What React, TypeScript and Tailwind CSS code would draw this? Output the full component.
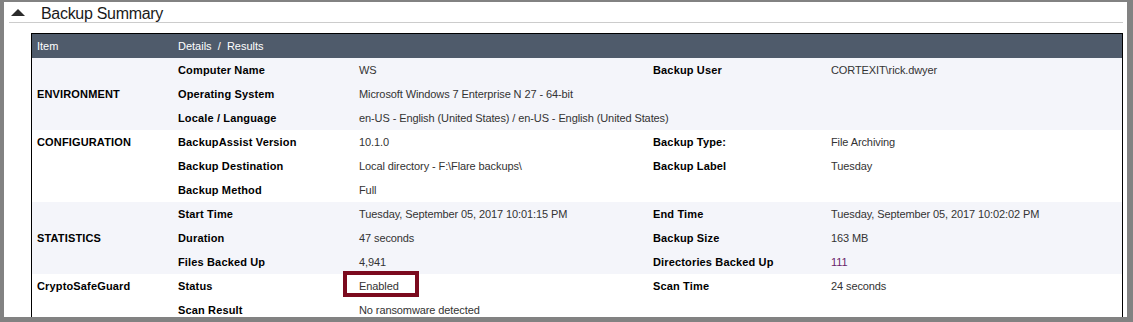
import React from "react";

type Row = { l1: string; v1: React.ReactNode; l2?: string; v2?: React.ReactNode };
type Group = { name: string; align: "top" | "middle"; bg: string; rows: Row[] };

const groups: Group[] = [
  {
    name: "ENVIRONMENT",
    align: "middle",
    bg: "bg-[#f4f5fa]",
    rows: [
      { l1: "Computer Name", v1: "WS", l2: "Backup User", v2: "CORTEXIT\\rick.dwyer" },
      { l1: "Operating System", v1: "Microsoft Windows 7 Enterprise N 27 - 64-bit" },
      { l1: "Locale / Language", v1: "en-US - English (United States) / en-US - English (United States)" },
    ],
  },
  {
    name: "CONFIGURATION",
    align: "top",
    bg: "bg-white",
    rows: [
      { l1: "BackupAssist Version", v1: "10.1.0", l2: "Backup Type:", v2: "File Archiving" },
      { l1: "Backup Destination", v1: "Local directory - F:\\Flare backups\\", l2: "Backup Label", v2: "Tuesday" },
      { l1: "Backup Method", v1: "Full" },
    ],
  },
  {
    name: "STATISTICS",
    align: "middle",
    bg: "bg-[#f4f5fa]",
    rows: [
      {
        l1: "Start Time",
        v1: "Tuesday, September 05, 2017 10:01:15 PM",
        l2: "End Time",
        v2: "Tuesday, September 05, 2017 10:02:02 PM",
      },
      { l1: "Duration", v1: "47 seconds", l2: "Backup Size", v2: "163 MB" },
      {
        l1: "Files Backed Up",
        v1: "4,941",
        l2: "Directories Backed Up",
        v2: <span className="text-[#6a1f6a]">111</span>,
      },
    ],
  },
  {
    name: "CryptoSafeGuard",
    align: "top",
    bg: "bg-white",
    rows: [
      {
        l1: "Status",
        v1: (
          <>
            Enabled
            <span className="absolute left-[-11px] top-[-3px] w-[76px] h-[26px] border-4 border-[#7b0a1e] pointer-events-none" />
          </>
        ),
        l2: "Scan Time",
        v2: "24 seconds",
      },
      { l1: "Scan Result", v1: "No ransomware detected" },
      { l1: "", v1: "" },
    ],
  },
];

const lbl = "px-[5px] py-0 font-bold text-black tracking-[0.15px] whitespace-nowrap overflow-hidden";
const val = "px-[5px] py-0 text-[#333] tracking-[-0.1px] whitespace-nowrap";

export default function App() {
  return (
    <div
      className="w-[1133px] h-[322px] bg-[#828282] pt-[2px] pl-[4px] pr-[6px] pb-[5px]"
      style={{ fontFamily: '"Liberation Sans", Arial, sans-serif' }}
    >
      <div className="bg-white h-full overflow-hidden">
        <div className="flex h-[20px]">
          <svg width="14" height="7" viewBox="0 0 14 7" className="ml-[7px] mt-[7px] shrink-0">
            <polygon points="7,0 14,7 0,7" fill="#2b2b2b" />
          </svg>
          <div className="ml-[16px] mt-[3px] leading-[17px] text-[16px] text-[#1a1a1a] tracking-[-0.3px]">
            Backup Summary
          </div>
        </div>
        <div className="ml-[5px] mr-[4px] h-px bg-[#cccccc]" />
        <div className="ml-[27px] mt-[10px] w-[1092px] border border-b-0 border-black">
          <table className="w-[1090px] table-fixed border-collapse text-[11px]">
            <colgroup>
              <col className="w-[141px]" />
              <col className="w-[181px]" />
              <col className="w-[294px]" />
              <col className="w-[178px]" />
              <col className="w-[296px]" />
            </colgroup>
            <thead>
              <tr className="h-[24px] bg-[#4f5b6b] text-white">
                <th className="px-[5px] py-0 text-left font-normal">Item</th>
                <th colSpan={4} className="px-[5px] py-0 text-left font-normal whitespace-pre">
                  {"Details  /  Results"}
                </th>
              </tr>
            </thead>
            <tbody>
              {groups.map((g) =>
                g.rows.map((r, i) => (
                  <tr key={g.name + i} className={`h-[24px] ${g.bg}`}>
                    {i === 0 && (
                      <td
                        rowSpan={g.rows.length}
                        className={`px-[5px] font-bold text-black tracking-[0.15px] ${
                          g.align === "top" ? "align-top pt-[4px]" : "align-middle"
                        }`}
                      >
                        {g.name}
                      </td>
                    )}
                    <td className={lbl}>{r.l1}</td>
                    <td className={`${val} relative`}>{r.v1}</td>
                    <td className={lbl}>{r.l2 ?? ""}</td>
                    <td className={val}>{r.v2 ?? ""}</td>
                  </tr>
                ))
              )}
            </tbody>
          </table>
        </div>
      </div>
    </div>
  );
}
